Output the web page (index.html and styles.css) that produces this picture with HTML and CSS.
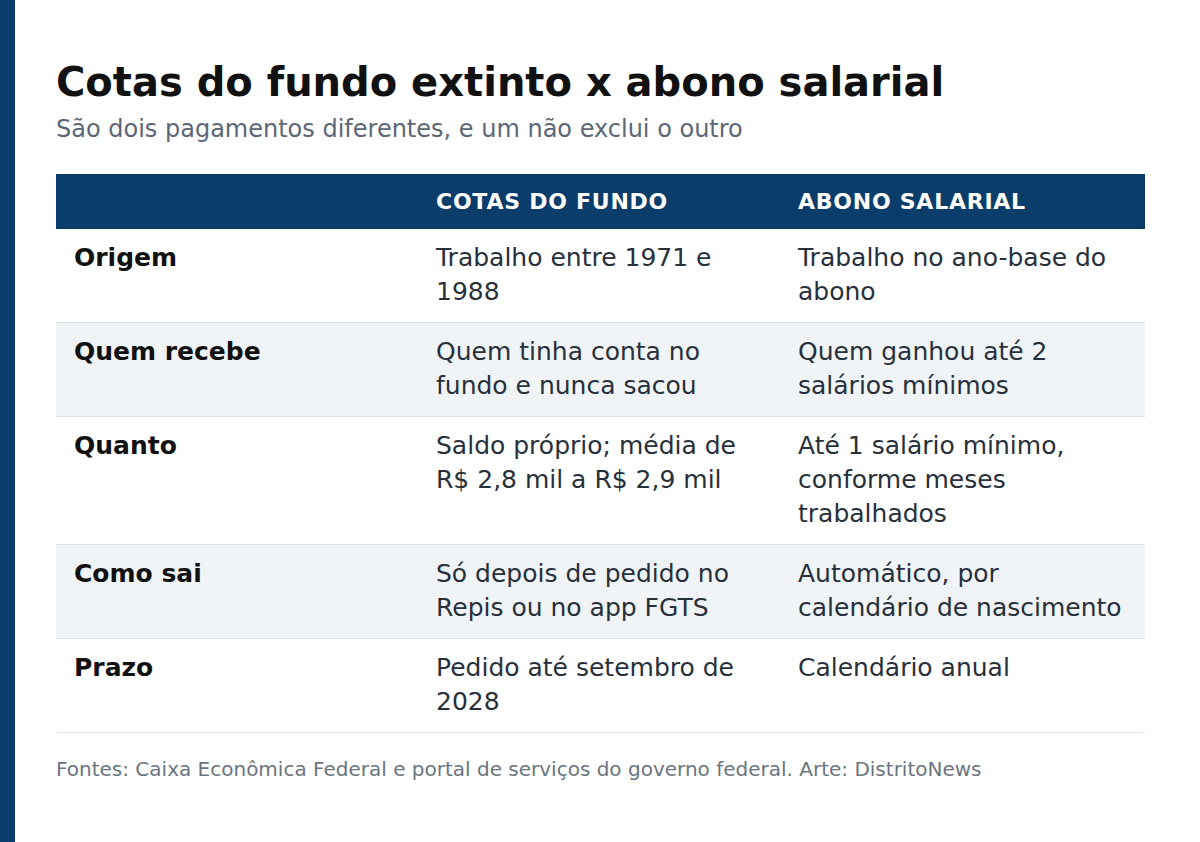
FILE: index.html
```html
<!DOCTYPE html>
<html lang="pt-BR">
<head>
<meta charset="utf-8">
<link rel="stylesheet" href="styles.css">
</head>
<body>
<div class="page">
  <div class="accent"></div>
  <main class="content">
    <h1 class="title">Cotas do fundo extinto x abono salarial</h1>
    <p class="subtitle">São dois pagamentos diferentes, e um não exclui o outro</p>
    <table class="grid">
      <colgroup>
        <col class="c1">
        <col class="c2">
        <col class="c3">
      </colgroup>
      <thead>
        <tr>
          <th></th>
          <th>COTAS DO FUNDO</th>
          <th>ABONO SALARIAL</th>
        </tr>
      </thead>
      <tbody>
        <tr>
          <td class="label">Origem</td>
          <td>Trabalho entre 1971 e 1988</td>
          <td>Trabalho no ano-base do abono</td>
        </tr>
        <tr class="alt">
          <td class="label">Quem recebe</td>
          <td>Quem tinha conta no fundo e nunca sacou</td>
          <td>Quem ganhou até 2 salários mínimos</td>
        </tr>
        <tr>
          <td class="label">Quanto</td>
          <td>Saldo próprio; média de R$ 2,8 mil a R$ 2,9 mil</td>
          <td>Até 1 salário mínimo, conforme meses trabalhados</td>
        </tr>
        <tr class="alt">
          <td class="label">Como sai</td>
          <td>Só depois de pedido no Repis ou no app FGTS</td>
          <td>Automático, por calendário de nascimento</td>
        </tr>
        <tr>
          <td class="label">Prazo</td>
          <td>Pedido até setembro de 2028</td>
          <td>Calendário anual</td>
        </tr>
      </tbody>
    </table>
    <p class="source">Fontes: Caixa Econômica Federal e portal de serviços do governo federal. Arte: DistritoNews</p>
  </main>
</div>
</body>
</html>
```

FILE: styles.css
```css
html, body {
  margin: 0;
  padding: 0;
  background: #ffffff;
}
body {
  font-family: "DejaVu Sans", sans-serif;
  width: 1200px;
  height: 842px;
  overflow: hidden;
}
.page {
  display: flex;
  height: 842px;
}
.accent {
  width: 15px;
  flex: none;
  background: #0b3d6b;
}
.content {
  flex: 1;
  padding: 58px 55px 0 41px;
}
.title {
  margin: 0;
  font-size: 40px;
  font-weight: bold;
  color: #111111;
  line-height: 48px;
}
.subtitle {
  margin: 7px 0 0;
  font-size: 24px;
  color: #5b6776;
  line-height: 32px;
}
.grid {
  margin-top: 29px;
  width: 1089px;
  border-collapse: collapse;
  table-layout: fixed;
}
.c1 { width: 362px; }
.c2 { width: 362px; }
.c3 { width: 365px; }
.grid th {
  background: #0b3d6b;
  color: #ffffff;
  font-size: 22px;
  font-weight: bold;
  text-align: left;
  padding: 0 18px;
  height: 55px;
  letter-spacing: 0.75px;
}
.grid td {
  vertical-align: top;
  font-size: 25px;
  line-height: 34px;
  color: #27303b;
  padding: 12px 18px 13px;
  border-bottom: 1px solid #dde3e9;
}
.grid tr.alt td {
  background: #f0f4f7;
}
.grid td.label {
  font-weight: bold;
  color: #111111;
}
.source {
  margin: 24px 0 0;
  font-size: 20px;
  color: #6b7580;
}
```
